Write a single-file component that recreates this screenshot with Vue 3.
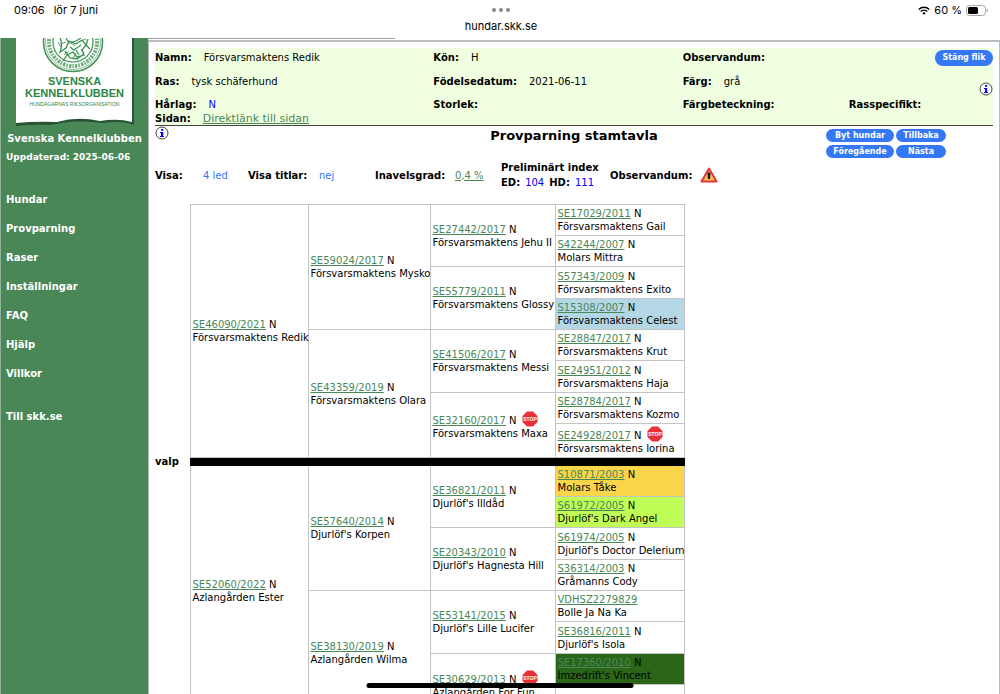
<template>
  <div class="screen">
    <header class="status-bar">
      <div class="clock"><span>09:06</span><span>lör 7 juni</span></div>
      <div class="address">
        <svg class="dots" viewBox="0 0 18 4" width="18" height="4">
          <circle cx="2" cy="2" r="2" /><circle cx="9" cy="2" r="2" /><circle cx="16" cy="2" r="2" />
        </svg>
        <span>hundar.skk.se</span>
      </div>
      <div class="battery">
        <svg viewBox="0 0 12 9" width="12" height="9">
          <path d="M.8 3.5a7.4 7.4 0 0 1 10.4 0M2.7 5.5a4.7 4.7 0 0 1 6.6 0" fill="none" stroke="#000" stroke-width="1.5" />
          <path d="M6 8.8 4.2 7a2.6 2.6 0 0 1 3.6 0z" />
        </svg>
        <span>60 %</span>
        <svg viewBox="0 0 22 11" width="22" height="11">
          <rect x=".5" y=".5" width="19" height="10" rx="3" fill="none" stroke="#a5a5a5" />
          <rect x="2" y="2" width="10" height="7" rx="1.5" />
          <path d="M20.7 3.7v3.6q1.3-.6 1.3-1.8t-1.3-1.8" fill="#a5a5a5" />
        </svg>
      </div>
    </header>

    <div class="page">
      <aside class="sidebar">
        <div class="logo">
          <svg class="paper" viewBox="0 0 120 90" width="120" height="90">
            <path d="M1 0H119V87Q108 82 88 85Q60 81 36 87Q18 86 1 88z" fill="#1d4527" opacity=".75" />
            <path d="M1 0H117V84Q103 80 85 83Q62 78 42 84Q20 83 1 85z" fill="#fff" />
            <g fill="none" stroke="#3b9150">
              <circle cx="58" cy="4" r="29.5" stroke-width="1.5" />
              <circle cx="58" cy="4" r="27.5" stroke-width=".6" />
              <circle cx="58" cy="4" r="24" stroke-width="4" stroke-dasharray="1.5 1 2.4 1.2" opacity=".75" />
              <circle cx="58" cy="4" r="20" stroke-width="1.2" />
              <path d="M45 0q3 6 0 14l6-4 3-7 7 3 6-4 4 5-4 5 2 5-7 2-4-5-6 3-4 6M51 0l3 5 7-2 5-3M50 13l5 7 7 1 7-5M61 12l3 5M55 9l4 3 7-5M73 1l-2 6 4 4" stroke-width="1.3" />
              <path d="M46 6l5-2M49 17l5-4M58 21l3-6M66 3l5-2M66 11l3 4M43 4l3 5M56 5l4 3" stroke-width=".9" />
            </g>
          </svg>
          <strong>SVENSKA</strong>
          <strong>KENNELKLUBBEN</strong>
          <small>HUNDÄGARNAS RIKSORGANISATION</small>
        </div>
        <p class="club">Svenska Kennelklubben</p>
        <p class="updated">Uppdaterad: 2025-06-06</p>
        <nav>
          <a v-for="item in menu" :key="item" href="#">{{ item }}</a>
          <a class="external" href="#">Till skk.se</a>
        </nav>
      </aside>

      <div class="content">
        <div class="progress"></div>
        <main>
          <section class="dog">
            <dl>
              <div><dt>Namn:</dt><dd>Försvarsmaktens Redik</dd></div>
              <div><dt>Kön:</dt><dd>H</dd></div>
              <div><dt>Observandum:</dt></div>
              <div class="end"><button class="pill close">Stäng flik</button></div>

              <div><dt>Ras:</dt><dd>tysk schäferhund</dd></div>
              <div><dt>Födelsedatum:</dt><dd>2021-06-11</dd></div>
              <div><dt>Färg:</dt><dd>grå</dd></div>
              <div class="end">
                <button class="info" aria-label="Information">
                  <svg viewBox="0 0 14 14" width="14" height="14">
                    <circle cx="7" cy="7" r="6" fill="#fff" stroke="#444" />
                    <path d="M6 3h2.2v1.8H6zM5 6h3.2v4H9v1H5v-1h1V7H5z" fill="#00f" />
                  </svg>
                </button>
              </div>

              <div><dt>Hårlag:</dt><dd class="code">N</dd></div>
              <div><dt>Storlek:</dt></div>
              <div><dt>Färgbeteckning:</dt></div>
              <div><dt>Rasspecifikt:</dt></div>

              <div class="wide"><dt>Sidan:</dt><dd><a class="direct" href="#">Direktlänk till sidan</a></dd></div>
            </dl>
          </section>

          <section class="title-row">
            <button class="info" aria-label="Information">
              <svg viewBox="0 0 14 14" width="14" height="14">
                <circle cx="7" cy="7" r="6" fill="#fff" stroke="#444" />
                <path d="M6 3h2.2v1.8H6zM5 6h3.2v4H9v1H5v-1h1V7H5z" fill="#00f" />
              </svg>
            </button>
            <h1>Provparning stamtavla</h1>
            <div class="actions">
              <button class="pill">Byt hundar</button>
              <button class="pill">Tillbaka</button>
              <button class="pill">Föregående</button>
              <button class="pill">Nästa</button>
            </div>
          </section>

          <section class="filters">
            <label for="generations">Visa:</label>
            <select id="generations" v-model="generations">
              <option>4 led</option>
            </select>
            <label for="titles">Visa titlar:</label>
            <select id="titles" v-model="titles">
              <option>nej</option>
            </select>
            <b>Inavelsgrad:</b>
            <a href="#">0,4 %</a>
            <div class="index">
              <b>Preliminärt index</b>
              <div class="scores"><b>ED:</b><span>104</span><b>HD:</b><span>111</span></div>
            </div>
            <b>Observandum:</b>
            <svg viewBox="0 0 18 16" width="18" height="16">
              <path d="M9 1.5 16.5 14.5H1.5z" fill="#fcbf49" stroke="#e8353b" stroke-width="2" stroke-linejoin="round" />
              <path d="M7.6 5.5h2.8l-.3 6.5H7.9z" fill="#111" />
            </svg>
          </section>

          <table class="pedigree">
            <colgroup>
              <col class="c-label"><col class="c1"><col class="c2"><col class="c3"><col class="c4">
            </colgroup>
            <tbody>
              <template v-for="(half, h) in halves" :key="h">
                <tr v-if="h === 1" class="divider">
                  <th scope="row">valp</th>
                  <td colspan="4"></td>
                </tr>
                <tr v-for="(row, r) in half" :key="h + '-' + r">
                  <th v-if="r === 0" rowspan="8"></th>
                  <td v-for="dog in row" :key="dog.reg" :rowspan="dog.span" :class="dog.mark">
                    <div class="reg">
                      <span><a href="#">{{ dog.reg }}</a> {{ dog.hair }}</span>
                      <svg v-if="dog.stop" viewBox="0 0 16 16" width="16" height="16">
                        <path d="M5 .5h6L15.5 5v6L11 15.5H5L.5 11V5z" fill="#ea2f3a" />
                        <text x="8" y="10" text-anchor="middle">STOP</text>
                      </svg>
                    </div>
                    <div>{{ dog.name }}</div>
                  </td>
                </tr>
              </template>
            </tbody>
          </table>
        </main>
      </div>
    </div>
    <div class="home-indicator"></div>
  </div>
</template>

<script setup>
import { ref } from 'vue'

const generations = ref('4 led')
const titles = ref('nej')
const menu = ['Hundar', 'Provparning', 'Raser', 'Inställningar', 'FAQ', 'Hjälp', 'Villkor']

const d = (reg, name, extra = {}) => ({ reg, name, hair: 'N', ...extra })

// each side holds one list per generation: 1, 2, 4 and 8 dogs
const sire = [
  [d('SE46090/2021', 'Försvarsmaktens Redik')],
  [d('SE59024/2017', 'Försvarsmaktens Mysko'), d('SE43359/2019', 'Försvarsmaktens Olara')],
  [
    d('SE27442/2017', 'Försvarsmaktens Jehu II'),
    d('SE55779/2011', 'Försvarsmaktens Glossy'),
    d('SE41506/2017', 'Försvarsmaktens Messi'),
    d('SE32160/2017', 'Försvarsmaktens Maxa', { stop: true })
  ],
  [
    d('SE17029/2011', 'Försvarsmaktens Gail'),
    d('S42244/2007', 'Molars Mittra'),
    d('S57343/2009', 'Försvarsmaktens Exito'),
    d('S15308/2007', 'Försvarsmaktens Celest', { mark: 'blue' }),
    d('SE28847/2017', 'Försvarsmaktens Krut'),
    d('SE24951/2012', 'Försvarsmaktens Haja'),
    d('SE28784/2017', 'Försvarsmaktens Kozmo'),
    d('SE24928/2017', 'Försvarsmaktens Iorina', { stop: true })
  ]
]

const dam = [
  [d('SE52060/2022', 'Azlangården Ester')],
  [d('SE57640/2014', "Djurlöf's Korpen"), d('SE38130/2019', 'Azlangården Wilma')],
  [
    d('SE36821/2011', "Djurlöf's Illdåd"),
    d('SE20343/2010', "Djurlöf's Hagnesta Hill"),
    d('SE53141/2015', "Djurlöf's Lille Lucifer"),
    d('SE30629/2013', 'Azlangården For Fun', { stop: true })
  ],
  [
    d('S10871/2003', 'Molars Tåke', { mark: 'yellow' }),
    d('S61972/2005', "Djurlöf's Dark Angel", { mark: 'lime' }),
    d('S61974/2005', "Djurlöf's Doctor Delerium"),
    d('S36314/2003', 'Gråmanns Cody'),
    d('VDHSZ2279829', 'Bolle Ja Na Ka', { hair: '' }),
    d('SE36816/2011', "Djurlöf's Isola"),
    d('SE17360/2010', "Imzedrift's Vincent", { mark: 'green' }),
    d('SE33733/2011', '')
  ]
]

function toRows(side) {
  return Array.from({ length: 8 }, (_, i) =>
    side.flatMap((dogs) => {
      const span = 8 / dogs.length
      return i % span === 0 ? [{ ...dogs[i / span], span }] : []
    })
  )
}

const halves = [toRows(sire), toRows(dam)]
</script>

<style>
body {
  margin: 0;
}
</style>

<style scoped>
* {
  box-sizing: border-box;
}

.screen {
  position: relative;
  display: flex;
  flex-direction: column;
  height: 100vh;
  overflow: hidden;
  background: #fff;
  color: #000;
  font: 10px/13px "DejaVu Sans", Verdana, sans-serif;
}

.status-bar {
  display: grid;
  grid-template-columns: 1fr auto 1fr;
  flex: none;
  height: 38px;
  padding: 3px 12px 0 14px;
  font: 11px/14px Inter, "Liberation Sans", sans-serif;
}

.clock {
  display: flex;
  gap: 9px;
}

.address {
  display: flex;
  flex-direction: column;
  align-items: center;
  gap: 7px;
  padding-top: 5px;
}

.dots {
  fill: #8a8a8a;
}

.battery {
  display: flex;
  justify-content: flex-end;
  align-items: center;
  gap: 4px;
  height: 14px;
}

.page {
  display: flex;
  flex: 1;
  min-height: 0;
}

.sidebar {
  flex: none;
  width: 148px;
  padding: 0 5px;
  border-left: 1px solid #8fb398;
  background: #4a8757;
  color: #fff;
  font-weight: bold;
}

.logo {
  position: relative;
  display: flex;
  flex-direction: column;
  align-items: center;
  height: 94px;
  padding-top: 37px;
  color: #2e8546;
  font: bold 11px/12px "Liberation Sans", Arial, sans-serif;
}

.paper {
  position: absolute;
  top: 0;
  left: 9px;
}

.logo strong,
.logo small {
  position: relative;
}

.logo small {
  font-size: 5px;
  font-weight: normal;
  line-height: 10px;
  white-space: nowrap;
}

.sidebar p {
  margin: 0;
  white-space: nowrap;
}

.club {
  text-align: center;
}

.updated {
  padding-top: 6px;
  font-size: 9px;
}

nav {
  display: flex;
  flex-direction: column;
  gap: 16px;
  padding-top: 29px;
  line-height: 13px;
}

nav a {
  color: #fff;
  text-decoration: none;
}

.external {
  margin-top: 14px;
}

.content {
  flex: 1;
  min-width: 0;
}

.progress {
  width: 29%;
  height: 1px;
  margin-bottom: 1px;
  background: #9aa0a6;
}

main {
  height: 100%;
  padding: 6px 6px 0;
  border: 1px solid #b9bdc0;
  border-top-width: 2px;
}

.dog {
  height: 78px;
  border-bottom: 1px solid #444;
  background: #f0ffe0;
}

dl {
  display: grid;
  grid-template-columns: 278fr 249fr 166fr 144fr;
  grid-template-rows: 19px 29px 16px 12px;
  margin: 0;
}

dl > div {
  display: flex;
  align-items: center;
  gap: 12px;
}

dt {
  font-weight: bold;
}

dd {
  margin: 0;
}

.wide {
  grid-column: 1 / -1;
}

.end {
  justify-content: flex-end;
}

.end .info {
  align-self: flex-end;
}

.code {
  color: #00f;
}

.direct {
  font-size: 11px;
}

a {
  color: #4a8757;
}

button {
  padding: 0;
  border: 0;
  background: none;
  font: inherit;
  cursor: pointer;
}

.info {
  display: flex;
  height: 14px;
}

.pill {
  height: 13px;
  border-radius: 8px;
  background: #3478f6;
  color: #fff;
  font-size: 8px;
  font-weight: bold;
  line-height: 13px;
}

.close {
  width: 58px;
  height: 16px;
}

.title-row {
  display: grid;
  grid-template-columns: 1fr auto 1fr;
  height: 34px;
}

h1 {
  margin: 0;
  font-size: 13px;
  line-height: 20px;
}

.actions {
  display: grid;
  grid-template-columns: 68px 50px;
  align-content: start;
  justify-content: end;
  gap: 3px 2px;
  padding: 3px 47px 0 0;
}

.filters {
  display: grid;
  grid-template-columns: 48px 45px 71px 56px 80px 46px 109px 90px 18px;
  align-items: center;
  height: 28px;
}

.filters label {
  font-weight: bold;
}

select {
  padding: 0;
  border: 0;
  background: none;
  color: #3478f6;
  font: inherit;
  appearance: none;
}

.index {
  line-height: 15px;
  white-space: nowrap;
}

.scores {
  display: flex;
  gap: 5px;
}

.scores span {
  color: #00f;
}

.pedigree {
  width: 529px;
  margin-top: 16px;
  border-collapse: collapse;
  table-layout: fixed;
}

.c-label {
  width: 35px;
}

.c1 {
  width: 118px;
}

.c2 {
  width: 122px;
}

.c3 {
  width: 125px;
}

.c4 {
  width: 129px;
}

.pedigree tr {
  height: 31px;
}

.pedigree tr:nth-child(3n) {
  height: 32px;
}

.pedigree th {
  padding: 0;
  text-align: left;
}

.pedigree td {
  padding: 2px;
  border: 1px solid #c4c4c4;
  white-space: nowrap;
}

.pedigree tr.divider {
  height: 8px;
  line-height: 6px;
}

.pedigree .divider td {
  padding: 0;
  border-color: #000;
  background: #000;
}

.reg {
  display: flex;
  align-items: flex-end;
  gap: 6px;
}

.reg svg text {
  fill: #fff;
  font: bold 5px "Liberation Sans", Arial, sans-serif;
}

.blue {
  background: #b3d7e4;
}

.yellow {
  background: #f9d649;
}

.lime {
  background: #c0fe57;
}

.green {
  background: #2a6518;
}

.home-indicator {
  position: absolute;
  bottom: 6px;
  left: 50%;
  width: 267px;
  height: 5px;
  border-radius: 3px;
  background: #000;
  transform: translateX(-50%);
}
</style>
